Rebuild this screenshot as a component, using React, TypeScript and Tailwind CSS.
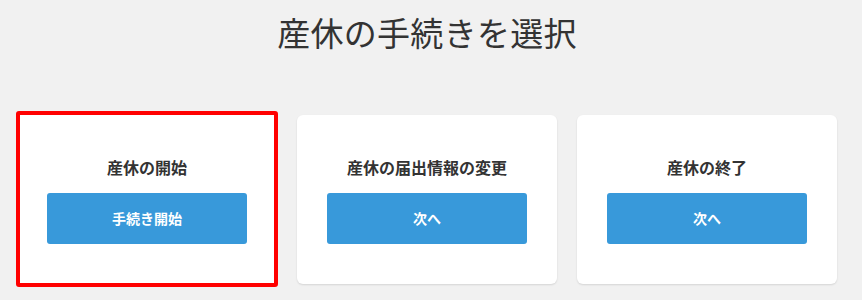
export default function App() {
  const cards = [
    { title: "産休の開始", button: "手続き開始", selected: true },
    { title: "産休の届出情報の変更", button: "次へ", selected: false },
    { title: "産休の終了", button: "次へ", selected: false },
  ];
  return (
    <div
      className="min-h-[300px] w-full bg-[#f1f1f1] text-[#333333]"
      style={{ fontFamily: '"Noto Sans CJK JP", "Noto Sans", sans-serif' }}
    >
      <div className="ml-[17px] w-[820px] pt-[8px]">
        <h1 className="text-center text-[33px] font-normal leading-[48px] tracking-[0.3px] text-[#333333]">
          産休の手続きを選択
        </h1>
        <div className="mt-[59px] flex items-start gap-5">
          {cards.map((c) =>
            c.selected ? (
              <div
                key={c.title}
                className="-mx-[1px] -mb-[3px] -mt-[4px] flex h-[176px] w-[262px] flex-col items-center rounded-[3px] border-4 border-[#ff0000] bg-white pt-10"
              >
                <div className="h-6 text-[16px] font-bold leading-6">{c.title}</div>
                <button className="mt-[14px] flex h-[51px] w-[200px] items-center justify-center rounded-[3px] bg-[#3899da] text-[14px] font-bold text-white">
                  {c.button}
                </button>
              </div>
            ) : (
              <div
                key={c.title}
                className="flex h-[169px] w-[260px] flex-col items-center rounded-[6px] bg-white pt-10 shadow-[0_1px_2px_rgba(0,0,0,0.12)]"
              >
                <div className="h-6 text-[16px] font-bold leading-6">{c.title}</div>
                <button className="mt-[14px] flex h-[51px] w-[200px] items-center justify-center rounded-[3px] bg-[#3899da] text-[14px] font-bold text-white">
                  {c.button}
                </button>
              </div>
            )
          )}
        </div>
      </div>
    </div>
  );
}
